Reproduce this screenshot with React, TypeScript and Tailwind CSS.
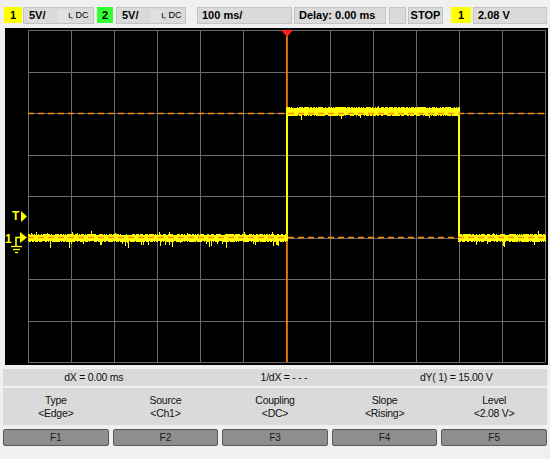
import React from 'react'

// deterministic noise so the trace looks the same on every render
function makeRand(seed: number) {
  let s = seed
  return () => {
    s = (s * 1103515245 + 12345) % 2147483648
    return s / 2147483648
  }
}

function band(x0: number, x1: number, top: number, bot: number, spike: number, seed: number) {
  const r = makeRand(seed)
  let d = ''
  for (let x = x0; x <= x1; x += 1) {
    let t = top - Math.round(r() * 1.4)
    let b = bot + Math.round(r() * 1.4)
    if (r() < spike) b += 2 + Math.round(r() * 4)
    if (r() < spike / 2) t -= 1 + Math.round(r() * 2)
    d += `M${x + 0.5} ${t}V${b}`
  }
  return d
}

const gridX = Array.from({ length: 13 }, (_, i) => Math.round(28 + i * 43.08) + 0.5)
const gridY = Array.from({ length: 9 }, (_, i) => Math.round(29 + i * 41.5) + 0.5)

function Scope() {
  const lowA = band(28, 285, 234, 240, 0.1, 7)
  const lowB = band(460, 545, 234, 240, 0.1, 19)
  const high = band(288, 458, 107, 114, 0.02, 31)

  return (
    <div className="ml-[5px] w-[543px] h-[337px] bg-black">
      <svg width="543" height="337" viewBox="5 27 543 337">
        {gridX.map((x, i) => (
          <line key={'v' + i} x1={x} y1={29} x2={x} y2={361} stroke="#6b6b6b" strokeWidth="1" />
        ))}
        {gridY.map((y, i) => (
          <line key={'h' + i} x1={28} y1={y} x2={545} y2={y} stroke="#6b6b6b" strokeWidth="1" />
        ))}

        {/* trigger position */}
        <line x1={287} y1={30} x2={287} y2={361} stroke="#ff8000" strokeWidth="1.6" />

        {/* trace */}
        <g shapeRendering="crispEdges">
          <path d={lowA} stroke="#ffff00" strokeWidth="1" />
          <path d={lowB} stroke="#ffff00" strokeWidth="1" />
          <path d={high} stroke="#ffff00" strokeWidth="1" />
          <rect x={286} y={106} width={2} height={134} fill="#ffff00" />
          <rect x={458} y={106} width={2} height={135} fill="#ffff00" />
          <rect x={429} y={114} width={1} height={3} fill="#ffff00" />
        </g>

        {/* cursors */}
        <line x1={28} y1={112.5} x2={545} y2={112.5} stroke="#ff8c00" strokeWidth="1.6" strokeDasharray="6 4" />
        <line x1={28} y1={236.5} x2={545} y2={236.5} stroke="#ff8c00" strokeWidth="1.6" strokeDasharray="6 4" />

        <polygon points="281,29 293,29 287,36" fill="#ff2020" />

        {/* trigger level + channel markers */}
        <text x={12} y={219} fill="#ffff00" fontSize="12" fontWeight="bold" fontFamily="Liberation Sans, sans-serif">T</text>
        <polygon points="21,210 27,215.5 21,221" fill="#ffff00" />
        <text x={5} y={242} fill="#ffff00" fontSize="12" fontWeight="bold" fontFamily="Liberation Sans, sans-serif">1</text>
        <polyline points="16,245 16,236.5 21,236.5" fill="none" stroke="#ffff00" strokeWidth="1.6" />
        <polygon points="20,231 27,236.5 20,242" fill="#ffff00" />
        <line x1={11} y1={245.5} x2={22} y2={245.5} stroke="#ffff00" strokeWidth="1.3" />
        <line x1={13} y1={248.5} x2={20} y2={248.5} stroke="#ffff00" strokeWidth="1.3" />
        <line x1={15} y1={251.5} x2={18} y2={251.5} stroke="#ffff00" strokeWidth="1.3" />
      </svg>
    </div>
  )
}

function Box({ className, children }: { className: string; children?: React.ReactNode }) {
  return (
    <div className={`h-[17px] flex items-center border border-[#c4c4c4] bg-[#dadada] text-[11px] font-bold text-black leading-none ${className}`}>
      {children}
    </div>
  )
}

function TopBar() {
  return (
    <div className="h-[28px] flex items-start pt-[7px] pl-[4px]">
      <div className="w-[18px] h-[16px] bg-[#ffff00] flex items-center justify-center text-[11px] font-bold">1</div>
      <Box className="ml-[1px] w-[71px] pl-[5px]">
        5V/<span className="ml-[12px] w-[10px] h-[12px] bg-[#e2e2e2]" /><span className="text-[9px] font-normal ml-[1px]">ɩ, DC</span>
      </Box>
      <div className="ml-[3px] w-[16px] h-[16px] bg-[#33ff33] flex items-center justify-center text-[11px] font-bold">2</div>
      <Box className="ml-[3px] w-[70px] pl-[5px]">
        5V/<span className="ml-[12px] w-[10px] h-[12px] bg-[#e2e2e2]" /><span className="text-[9px] font-normal ml-[1px]">ɩ, DC</span>
      </Box>
      <Box className="ml-[11px] w-[95px] pl-[4px]">100 ms/</Box>
      <Box className="ml-[2px] w-[92px] pl-[4px]">Delay: 0.00 ms</Box>
      <Box className="ml-[3px] w-[17px]" />
      <Box className="ml-[2px] w-[35px] justify-center">STOP</Box>
      <div className="ml-[8px] w-[20px] h-[16px] bg-[#ffff00] flex items-center justify-center text-[11px] font-bold">1</div>
      <Box className="ml-[2px] w-[74px] pl-[4px]">2.08 V</Box>
    </div>
  )
}

const softkeys = [
  ['Type', '<Edge>'],
  ['Source', '<Ch1>'],
  ['Coupling', '<DC>'],
  ['Slope', '<Rising>'],
  ['Level', '<2.08 V>'],
]

export default function App() {
  return (
    <div className="w-[550px] h-[459px] bg-[#f0f0f0] overflow-hidden" style={{ fontFamily: '"Liberation Sans", Arial, sans-serif' }}>
      <TopBar />
      <Scope />
      <div className="mt-[4px] mx-[3px] h-[17px] bg-[#dadada] grid grid-cols-3 items-center text-[10.5px] text-[#111] tracking-tight">
        <span className="text-center">dX = 0.00 ms</span>
        <span className="text-center pl-[18px]">1/dX = - - -</span>
        <span className="text-center">dY( 1) = 15.00 V</span>
      </div>
      <div className="mt-[2px] mx-[3px] h-[37px] bg-[#dadada] grid grid-cols-5 gap-[4px] text-[10.5px] text-[#111] tracking-tight">
        {softkeys.map(([label, value]) => (
          <div key={label} className="flex flex-col items-center justify-center gap-[3px] leading-none">
            <span>{label}</span>
            <span>{value}</span>
          </div>
        ))}
      </div>
      <div className="mt-[4px] mx-[3px] grid grid-cols-5 gap-[4px]">
        {['F1', 'F2', 'F3', 'F4', 'F5'].map(f => (
          <div key={f} className="h-[17px] rounded-[2px] border border-[#5a5a5a] bg-[#8e8e8e] flex items-center justify-center text-[10px] text-[#1a1a1a]">
            {f}
          </div>
        ))}
      </div>
    </div>
  )
}
